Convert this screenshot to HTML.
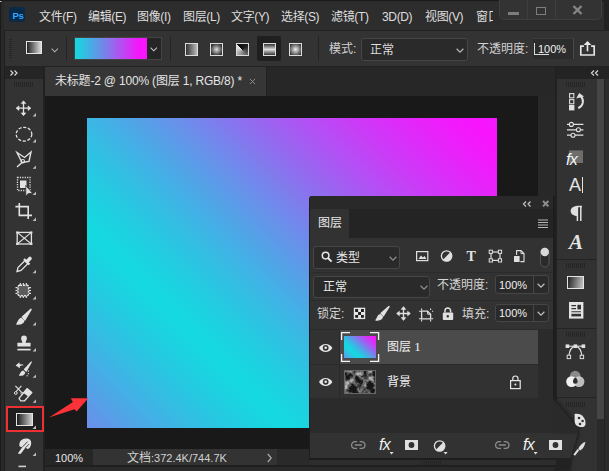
<!DOCTYPE html>
<html lang="zh-CN">
<head>
<meta charset="utf-8">
<title>Photoshop</title>
<style>
html,body{margin:0;padding:0;}
body{width:609px;height:471px;overflow:hidden;background:#292929;position:relative;
 font-family:"Liberation Sans","Noto Sans CJK SC",sans-serif;font-size:12px;color:#dcdcdc;}
.abs{position:absolute;}
.t{position:absolute;white-space:nowrap;line-height:16px;color:#dedede;font-size:12px;}
svg{position:absolute;overflow:visible;}
#menubar{left:4px;top:2px;width:605px;height:28px;background:#2d2d2d;}
#optbar{left:5px;top:30px;width:604px;height:36px;background:#333333;border-top:1px solid #232323;box-sizing:border-box;}
#lstrip{left:0;top:0;width:1px;height:471px;background:#1a1a1a;}
#lstrip2{left:4px;top:30px;width:1px;height:441px;background:#1e1e1e;}
#hl66{left:4px;top:66px;width:605px;height:1px;background:#222222;}
#gap43{left:43px;top:67px;width:2px;height:404px;background:#212121;}
#tabstrip{left:45px;top:67px;width:511px;height:29px;background:#272727;}
#tab{left:45px;top:67px;width:221px;height:29px;background:#363636;border-right:1px solid #212121;box-sizing:content-box;}
#canvas{left:45px;top:96px;width:493px;height:353px;background:#191919;}
#vscroll{left:538px;top:96px;width:18px;height:353px;background:#282828;}
#status{left:45px;top:449px;width:511px;height:22px;background:#2a2a2a;}
#st1{left:45px;top:449px;width:48px;height:16px;background:#262626;}
#st2{left:93px;top:449px;width:184px;height:16px;background:#333333;}
#st3{left:45px;top:465px;width:511px;height:2px;background:#1f1f1f;}
#toolbar{left:5px;top:67px;width:38px;height:404px;background:#333333;}
#toolhead{left:5px;top:67px;width:38px;height:12px;background:#252525;}
#rcol{left:557px;top:67px;width:40px;height:404px;background:#323232;}
#rcolhead{left:557px;top:67px;width:52px;height:12px;background:#232323;}
#rthumb{left:597px;top:79px;width:7px;height:340px;background:#464646;}
#rtrack{left:597px;top:419px;width:7px;height:52px;background:#2a2a2a;}
#redge{left:604px;top:79px;width:5px;height:392px;background:#2c2c2c;border-left:1px solid #222;box-sizing:border-box;}
#rline{left:555px;top:67px;width:2px;height:404px;background:#212121;}
.grip{position:absolute;height:5px;background:repeating-linear-gradient(90deg,#252525 0 1px,transparent 1px 2px);}
.vsep{position:absolute;width:1px;background:#242424;}
.hsep{position:absolute;height:1px;background:#242424;}
.dd{position:absolute;box-sizing:border-box;background:#2a2a2a;border:1px solid #464646;border-radius:3px;}
</style>
</head>
<body>
<div id="menubar" class="abs"></div>
<div id="optbar" class="abs"></div>
<div id="tabstrip" class="abs"></div>
<div id="tab" class="abs"></div>
<div id="canvas" class="abs"></div>
<div id="vscroll" class="abs"></div>
<div id="status" class="abs"></div><div id="st1" class="abs"></div><div id="st2" class="abs"></div><div id="st3" class="abs"></div>
<div id="lstrip" class="abs"></div><div id="lstrip2" class="abs"></div><div id="hl66" class="abs"></div><div id="gap43" class="abs"></div>
<div id="toolbar" class="abs"></div>
<div id="toolhead" class="abs"></div>
<div id="rcol" class="abs"></div>
<div id="rcolhead" class="abs"></div>
<div id="rthumb" class="abs"></div>
<div id="rtrack" class="abs"></div>
<div id="redge" class="abs"></div><div id="rline" class="abs"></div>

<div class="abs" style="left:0;top:0;width:2px;height:2px;background:#e8e8e8;border-radius:0 0 2px 0;"></div>
<!-- PS logo -->
<div class="abs" style="left:9px;top:7px;width:16px;height:15px;background:#0a2a4a;border-radius:3px;"></div>
<div class="t" style="left:12.5px;top:7.5px;font-size:9.5px;font-weight:bold;color:#31a8ff;line-height:15px;letter-spacing:-0.3px;">Ps</div>

<!-- MENU TEXT -->
<div class="t" style="left:39px;top:9px;letter-spacing:-0.35px;">文件(F)</div>
<div class="t" style="left:88px;top:9px;letter-spacing:-0.35px;">编辑(E)</div>
<div class="t" style="left:137px;top:9px;letter-spacing:-0.35px;">图像(I)</div>
<div class="t" style="left:183px;top:9px;letter-spacing:-0.35px;">图层(L)</div>
<div class="t" style="left:231px;top:9px;letter-spacing:-0.35px;">文字(Y)</div>
<div class="t" style="left:281px;top:9px;letter-spacing:-0.35px;">选择(S)</div>
<div class="t" style="left:331px;top:9px;letter-spacing:-0.35px;">滤镜(T)</div>
<div class="t" style="left:382px;top:9px;letter-spacing:-0.35px;">3D(D)</div>
<div class="t" style="left:425px;top:9px;letter-spacing:-0.35px;">视图(V)</div>
<div class="t" style="left:476px;top:9px;width:17px;overflow:hidden;">窗口</div>

<div class="abs" style="left:0;top:0;width:609px;height:1px;background:#1b1b1b;"></div>
<div class="abs" style="left:604px;top:0;width:5px;height:30px;background:#222222;"></div>
<!-- window controls -->
<div class="abs" style="left:499px;top:-2px;width:103px;height:22px;box-sizing:border-box;background:#333333;border:1px solid #3e3e3e;border-radius:0 0 5px 5px;"></div>
<div class="abs" style="left:527px;top:0;width:1px;height:19px;background:#3e3e3e;"></div>
<div class="abs" style="left:555px;top:0;width:1px;height:19px;background:#3e3e3e;"></div>
<div class="abs" style="left:508px;top:12px;width:11px;height:3px;background:#7d7d7d;"></div>
<div class="abs" style="left:536px;top:7px;width:10px;height:8.4px;box-sizing:border-box;border:1.8px solid #7d7d7d;"></div>
<svg style="left:572px;top:5px;" width="11" height="10" viewBox="0 0 11 10"><path d="M1.5 1 L9.5 9 M9.5 1 L1.5 9" stroke="#858585" stroke-width="2.4" fill="none"/></svg>

<!-- OPTIONS BAR -->
<div class="abs" style="left:9px;top:39px;width:3px;height:19px;background:repeating-linear-gradient(0deg,#262626 0 1px,transparent 1px 2px);"></div>
<div class="abs" style="left:26px;top:41px;width:16px;height:13px;box-sizing:border-box;border:1px solid #e6e6e6;background:linear-gradient(90deg,#222,#ddd);"></div>
<svg style="left:51px;top:47.5px;" width="7.5" height="5" viewBox="0 0 9 6"><path d="M0.7 0.8 L4.5 4.6 L8.3 0.8" stroke="#b0b0b0" stroke-width="1.3" fill="none"/></svg>
<div class="vsep" style="left:66px;top:36px;height:25px;"></div>
<div class="abs" style="left:74px;top:37px;width:88px;height:23px;box-sizing:border-box;border:1px solid #444444;background:#252525;"></div>
<div class="abs" style="left:75px;top:38px;width:72px;height:21px;background:linear-gradient(90deg,#14d9df 0%,#5a9ce6 30%,#a55cee 58%,#f416fb 88%,#f814fd 100%);"></div>
<svg style="left:150px;top:47px;" width="7.5" height="5" viewBox="0 0 9 6"><path d="M0.7 0.8 L4.5 4.6 L8.3 0.8" stroke="#c8c8c8" stroke-width="1.3" fill="none"/></svg>
<div class="vsep" style="left:170px;top:36px;height:25px;"></div>
<!-- gradient type icons -->
<div class="abs" style="left:257px;top:36px;width:24px;height:25px;background:#1f1f1f;border-radius:2px;"></div>
<div class="abs gi" style="left:185px;top:43px;width:13px;height:13px;box-sizing:border-box;border:1px solid #dcdcdc;background:linear-gradient(90deg,#333,#bbb);"></div>
<div class="abs gi" style="left:210px;top:43px;width:13px;height:13px;box-sizing:border-box;border:1px solid #dcdcdc;background:radial-gradient(circle,#ddd 0%,#333 80%);"></div>
<div class="abs gi" style="left:236px;top:43px;width:13px;height:13px;box-sizing:border-box;border:1px solid #dcdcdc;background:conic-gradient(from -45deg,#0c0c0c 0deg,#1c1c1c 90deg,#999 250deg,#f0f0f0 360deg);"></div>
<div class="abs gi" style="left:263px;top:43px;width:13px;height:13px;box-sizing:border-box;border:1px solid #dcdcdc;background:linear-gradient(180deg,#333,#ddd 50%,#333);"></div>
<div class="abs gi" style="left:289px;top:43px;width:13px;height:13px;box-sizing:border-box;border:1px solid #dcdcdc;background:radial-gradient(circle,#eee 0%,#333 90%);"></div>
<div class="vsep" style="left:318px;top:36px;height:25px;"></div>
<div class="t" style="left:329px;top:41px;color:#d0d0d0;">模式:</div>
<div class="dd" style="left:361px;top:38px;width:107px;height:23px;"></div>
<div class="t" style="left:370px;top:42px;">正常</div>
<svg style="left:456px;top:48px;" width="8" height="5.4" viewBox="0 0 9 6"><path d="M0.7 0.8 L4.5 4.6 L8.3 0.8" stroke="#b8b8b8" stroke-width="1.3" fill="none"/></svg>
<div class="t" style="left:477px;top:41px;color:#d0d0d0;">不透明度:</div>
<div class="abs" style="left:533px;top:38px;width:41px;height:21px;box-sizing:border-box;background:#2c2c2c;border-right:1px solid #4a4a4a;border-top:1px solid #3c3c3c;"></div>
<div class="abs" style="left:534px;top:43px;width:1px;height:12px;background:#ddd;"></div>
<div class="abs" style="left:534px;top:54px;width:15px;height:1px;background:#ddd;"></div>
<div class="t" style="left:538px;top:40.5px;color:#f0f0f0;font-size:11px;">100%</div>
<svg style="left:578.5px;top:39.5px;" width="17" height="16.5" viewBox="0 0 16 16"><path d="M4.5 6 H1.5 V14.5 H14.5 V6 H11.5" stroke="#e6e6e6" stroke-width="1.6" fill="none"/><path d="M8 11 V2" stroke="#e6e6e6" stroke-width="1.6" fill="none"/><path d="M4.2 4.8 L8 1 L11.8 4.8 Z" fill="#e6e6e6"/></svg>

<!-- TAB -->
<div class="t" style="left:55px;top:73px;color:#e4e4e4;letter-spacing:-0.19px;">未标题-2 @ 100% (图层 1, RGB/8) *</div>
<svg style="left:249px;top:78px;" width="7" height="7" viewBox="0 0 8 8"><path d="M1 1 L7 7 M7 1 L1 7" stroke="#8c8c8c" stroke-width="1.1" fill="none"/></svg>

<!-- ARTWORK -->
<svg id="art" style="left:87px;top:118px;" width="410" height="310" viewBox="87 118 410 310">
 <defs>
  <linearGradient id="g1" gradientUnits="userSpaceOnUse" x1="170.0" y1="310.0" x2="417.5" y2="62.5" spreadMethod="reflect">
 <stop offset="0.0000" stop-color="#14d9df"/>
 <stop offset="0.0625" stop-color="#1cd2e0"/>
 <stop offset="0.1250" stop-color="#27c8e2"/>
 <stop offset="0.1875" stop-color="#34bde3"/>
 <stop offset="0.2500" stop-color="#42b1e5"/>
 <stop offset="0.3125" stop-color="#52a3e7"/>
 <stop offset="0.3750" stop-color="#6395e9"/>
 <stop offset="0.4375" stop-color="#7486ec"/>
 <stop offset="0.5000" stop-color="#8676ee"/>
 <stop offset="0.5625" stop-color="#9867f0"/>
 <stop offset="0.6250" stop-color="#a958f3"/>
 <stop offset="0.6875" stop-color="#ba4af5"/>
 <stop offset="0.7500" stop-color="#ca3cf7"/>
 <stop offset="0.8125" stop-color="#d830f9"/>
 <stop offset="0.8750" stop-color="#e525fa"/>
 <stop offset="0.9375" stop-color="#f01bfc"/>
 <stop offset="1.0000" stop-color="#f814fd"/>
</linearGradient>
 </defs>
 <rect x="87" y="118" width="410" height="310" fill="url(#g1)"/>
</svg>

<!-- red arrow -->
<svg style="left:0;top:0;" width="609" height="471" viewBox="0 0 609 471"><path d="M49 417.4 L72.9 402 L70.8 398.3 L88.3 398.3 L76.6 411.5 L74.5 409.2 Z" fill="#fb3237"/></svg>

<!-- STATUS -->
<div class="t" id="zoomtxt" style="left:55px;top:450px;font-size:11px;color:#e6e6e6;">100%</div>
<div class="t" id="doctxt" style="left:127px;top:450px;color:#d2d2d2;">文档<span style="font-size:11px;">:372.4K/744.7K</span></div>
<svg style="left:267px;top:453px;" width="5" height="10" viewBox="0 0 5 10"><path d="M0.8 1 L4.2 5 L0.8 9" stroke="#aaa" stroke-width="1.2" fill="none"/></svg>

<!-- LEFT TOOLBAR -->
<svg style="left:0;top:0;" width="50" height="471" viewBox="0 0 50 471" fill="none" stroke="#e2e2e2" stroke-width="1.4">
 <!-- >> -->
 <path d="M10.5 70.5 L13 73 L10.5 75.5 M14.5 70.5 L17 73 L14.5 75.5" stroke="#d8d8d8" stroke-width="1.2"/>
 <!-- move -->
 <g>
  <path d="M23.5 101.5 V115 M16.8 108.2 H30.2" stroke-width="1.3"/>
  <path d="M21.2 103.6 L23.5 100.8 L25.8 103.6 Z M21.2 112.9 L23.5 115.7 L25.8 112.9 Z M18.9 105.9 L16.1 108.2 L18.9 110.5 Z M28.1 105.9 L30.9 108.2 L28.1 110.5 Z" fill="#e2e2e2" stroke-width="0.6"/>
 </g>
 <!-- ellipse marquee -->
 <ellipse cx="24" cy="134.2" rx="7.8" ry="6.9" stroke-dasharray="3.2 1.6" stroke-width="1.3"/>
 <!-- polygonal lasso -->
 <path d="M17 152.5 L24.5 157.5 L31 152 L29 161.5 L22 162.5 Z" stroke-width="1.4"/>
 <path d="M22 162.5 L17 167" stroke-width="1.4"/>
 <circle cx="22.8" cy="161.2" r="1.7" stroke-width="1.1"/>
 <!-- object select -->
 <rect x="17.5" y="177.5" width="12.5" height="13" stroke-dasharray="1.2 1.2" stroke-width="1.3"/>
 <rect x="20" y="180.5" width="6.5" height="7.5" fill="#e2e2e2" stroke="none"/>
 <path d="M25.8 185.5 L25.8 196 L28.3 193.6 L32.6 193.4 Z" fill="#e2e2e2" stroke="#333" stroke-width="0.8"/>
 <!-- crop -->
 <path d="M19.3 203 V215.4 H32 M15.4 206.6 H28.2 V219" stroke-width="1.6"/>
 <!-- frame -->
 <rect x="17.2" y="232.4" width="14.2" height="11.6" stroke-width="1.3"/>
 <path d="M17.2 232.4 L31.4 244 M31.4 232.4 L17.2 244" stroke-width="1.1"/>
 <path d="M16.2 231.4 h2.2 v2.2 h-2.2 Z M30.2 231.4 h2.2 v2.2 h-2.2 Z M16.2 242.8 h2.2 v2.2 h-2.2 Z M30.2 242.8 h2.2 v2.2 h-2.2 Z" fill="#e2e2e2" stroke="none"/>
 <!-- eyedropper -->
 <path d="M17 271.5 L18 267.5 L25 260.5 L28 263.5 L21 270.5 Z" stroke-width="1.3"/>
 <path d="M24 259 L29.5 264.5" stroke-width="2.2"/>
 <path d="M27 261.5 L30 258.5" stroke-width="3.6" stroke-linecap="round"/>
 <!-- patch/heal -->
 <rect x="18" y="285.3" width="10.6" height="10.4" rx="1.6" fill="#5c5c5c" stroke-width="1.4" stroke-dasharray="2.4 0.9"/>
 <path d="M20.3 283 V285 M23.3 283 V285 M26.3 283 V285 M20.3 296 V298 M23.3 296 V298 M26.3 296 V298 M15.5 287.6 H17.5 M15.5 290.5 H17.5 M15.5 293.4 H17.5 M29 287.6 H31 M29 290.5 H31 M29 293.4 H31" stroke-width="1.2"/>
 <!-- brush -->
 <path d="M31 309.4 L22.4 317 L24.8 319.8 Z" fill="#e2e2e2" stroke-width="1.6" stroke-linejoin="round"/>
 <path d="M21.4 317.8 C18.6 318 18 321.4 16 324.4 C19.8 325.6 24.4 324 24.4 320.6 Z" fill="#e2e2e2" stroke="none"/>
 <!-- stamp -->
 <path d="M24 335.6 a2.9 2.9 0 0 1 2.9 2.9 c0 1.8 -1.3 2.6 -1.3 4.3 H30.6 V346.6 H17.4 V342.8 H22.4 c0 -1.7 -1.3 -2.5 -1.3 -4.3 a2.9 2.9 0 0 1 2.9 -2.9 Z" fill="#e2e2e2" stroke="none"/>
 <path d="M17.4 349.6 H30.6" stroke-width="1.7"/>
 <!-- history brush -->
 <path d="M31.4 362 L24.4 369.4 L26.2 371.2 Z" fill="#e2e2e2" stroke-width="1.1" stroke-linejoin="round"/>
 <path d="M23.2 370.4 C21 370.6 20.4 373 18.8 375.6 C21.8 376.4 25.2 375 25.3 372.2 Z" fill="#e2e2e2" stroke="none"/>
 <path d="M15.6 365.4 L19.4 362.2 L19.6 364.2 C21.6 364 23.2 364.4 24.4 365.4 C22.8 365.2 21.2 365.4 19.8 366.2 L20 368.2 Z" fill="#e2e2e2" stroke="none"/>
 <path d="M28.2 370.5 C29 373 28 375.4 26.2 376.6" stroke-dasharray="1.2 1.3" stroke-width="1.1"/>
 <!-- bg eraser -->
 <path d="M27 388.6 L31.8 392.6 L24.6 400.8 H20.8 L19 398.4 Z" stroke-width="1.3" stroke-linejoin="round"/>
 <path d="M27 388.6 L31.8 392.6 L28.2 396.6 L23.2 392.8 Z" fill="#e2e2e2" stroke="none"/>
 <path d="M15.4 385.8 L21.6 392.4 M21.4 385.8 L16 391.6" stroke-width="1.1"/>
 <circle cx="15.8" cy="393" r="1.4" stroke-width="1"/>
 <circle cx="22" cy="393.4" r="1.1" stroke-width="0.9"/>
 <!-- smudge -->
 <path d="M19.4 446 C18.8 441.2 22 438.4 26 438.4 C29.6 438.4 31.4 440.2 31.2 443.4 C31 446.4 29.6 448.4 27.4 449 L25.6 447.6 L20.6 454 L17.8 453.6 L22.6 446.8 C21.4 447.2 20 447 19.4 446 Z" fill="#e2e2e2" stroke="none"/>
 <path d="M22.6 446.8 L27.6 441.6 M25.6 447.6 L29 444.2" stroke="#333" stroke-width="0.9"/>
 <!-- next icon top -->
 <path d="M18.5 466.4 H26" stroke-width="1.6" stroke="#cfcfcf"/>
 <!-- corner triangles -->
 <g fill="#bdbdbd" stroke="none">
  <path d="M36 113 V116.4 H32.6 Z"/><path d="M36 139 V142.4 H32.6 Z"/><path d="M36 165.4 V168.8 H32.6 Z"/>
  <path d="M36 191.6 V195 H32.6 Z"/><path d="M36 217.6 V221 H32.6 Z"/><path d="M36 269.8 V273.2 H32.6 Z"/>
  <path d="M36 296 V299.4 H32.6 Z"/><path d="M36 322 V325.4 H32.6 Z"/><path d="M36 348 V351.4 H32.6 Z"/>
  <path d="M36 374.4 V377.8 H32.6 Z"/><path d="M36 399.4 V402.8 H32.6 Z"/><path d="M36 452.6 V456 H32.6 Z"/>
 </g>
</svg>
<div class="grip" style="left:14px;top:82px;width:20px;"></div>
<!-- selected gradient tool + red box -->
<div class="abs" style="left:6px;top:406.3px;width:38px;height:26.2px;box-sizing:border-box;border:2.8px solid #ee3035;background:#1f1f1f;"></div>
<div class="abs" style="left:16px;top:413px;width:17px;height:13px;box-sizing:border-box;border:1px solid #e4e4e4;background:linear-gradient(90deg,#1a1a1a,#cfcfcf);"></div>
<svg style="left:32px;top:425px;" width="5" height="5" viewBox="0 0 5 5"><path d="M4 0.4 V4 H0.4 Z" fill="#bdbdbd"/></svg>

<!-- RIGHT COLUMN -->
<svg style="left:0;top:0;" width="609" height="471" viewBox="0 0 609 471" fill="none" stroke="#e0e0e0" stroke-width="1.3">
 <!-- << header -->
 <path d="M594 70.5 L591.5 73 L594 75.5 M598 70.5 L595.5 73 L598 75.5" stroke="#d8d8d8" stroke-width="1.2"/>
 <!-- history -->
 <rect x="569.6" y="93.6" width="4.2" height="4.2" stroke-width="1.1"/>
 <rect x="569.6" y="99.6" width="4.2" height="4.2" stroke-width="1.1"/>
 <rect x="569" y="105" width="5.4" height="5.4" fill="#e0e0e0" stroke="none"/>
 <path d="M578.2 108.2 C583.6 105.6 584.4 99.8 580.6 96" stroke-width="1.9"/>
 <path d="M576.2 98.6 L579.2 93 L584 96.6 Z" fill="#e0e0e0" stroke="none"/>
 <!-- properties sliders -->
 <path d="M567 124.4 H583.4 M567 129.8 H583.4 M567 135.2 H583.4" stroke-width="1.2"/>
 <circle cx="571.4" cy="124.4" r="2" fill="#323232" stroke-width="1.1"/>
 <circle cx="578.4" cy="129.8" r="2" fill="#323232" stroke-width="1.1"/>
 <circle cx="573" cy="135.2" r="2" fill="#323232" stroke-width="1.1"/>
 <!-- styles -->
 <rect x="569" y="150.4" width="14" height="12.6" fill="#6e6e6e" stroke="none"/>
 <!-- paragraph -->
 <path d="M576.6 206.6 H582 M577.4 206.6 V221 M580.8 206.6 V221" stroke-width="1.5"/>
 <path d="M577.4 206 C568.4 206 568.4 216 577.4 216 Z" fill="#e0e0e0" stroke="none"/>
 <!-- separators -->
 <path d="M557 259.5 H596 M557 328.5 H596 M557 397.5 H596" stroke="#232323" stroke-width="1"/>
 <!-- libraries icon -->
 <rect x="569" y="302" width="14.4" height="16.6" fill="#e4e4e4" stroke="none"/>
 <path d="M571.4 305.6 H576 M571.4 308.6 H576 M571.4 311.8 H581" stroke="#333" stroke-width="1.1"/>
 <rect x="577.4" y="304.8" width="3.6" height="4.6" fill="#333" stroke="none"/>
 <rect x="571.4" y="313.8" width="9.6" height="2.6" fill="#333" stroke="none"/>
 <!-- paths icon -->
 <path d="M568.8 357 C569.4 349.6 572 346.6 575.4 346.4 C578.8 346.6 581.4 349.6 582 357" stroke-width="1.2"/>
 <path d="M567.4 346.2 H583.4" stroke-width="1.1"/>
 <rect x="565.6" y="344.4" width="3.6" height="3.6" fill="#e0e0e0" stroke="none"/>
 <rect x="573.6" y="344.4" width="3.6" height="3.6" fill="#e0e0e0" stroke="none"/>
 <rect x="581.6" y="344.4" width="3.6" height="3.6" fill="#e0e0e0" stroke="none"/>
 <rect x="567.2" y="355.2" width="3.4" height="3.4" fill="#323232" stroke-width="1"/>
 <rect x="580.2" y="355.2" width="3.4" height="3.4" fill="#323232" stroke-width="1"/>
 <!-- channels icon -->
 <circle cx="575.2" cy="376.2" r="5.4" fill="#8a8a8a" stroke="none"/>
 <circle cx="571.6" cy="381.6" r="5.4" fill="#f0f0f0" stroke="none"/>
 <circle cx="579" cy="381.6" r="5.4" fill="#d6d6d6" stroke="none" fill-opacity="0.85"/>
 <path d="M575.3 377.6 a4 4 0 0 1 1.8 5.6 a4 4 0 0 1 -3.6 0 a4 4 0 0 1 1.8 -5.6 Z" fill="#2e2e2e" stroke="none"/>
</svg>
<div class="grip" style="left:566px;top:82px;width:20px;"></div>
<div class="grip" style="left:566px;top:263px;width:20px;"></div>
<div class="grip" style="left:566px;top:332px;width:20px;"></div>
<div class="grip" style="left:566px;top:402px;width:20px;"></div>
<div class="t" style="left:566px;top:152px;font-style:italic;font-size:16px;color:#f4f4f4;letter-spacing:-0.6px;">fx</div>
<div class="t" style="left:569px;top:175px;font-size:18px;line-height:20px;color:#e4e4e4;">A</div>
<div class="abs" style="left:582px;top:177px;width:1px;height:16px;background:#e4e4e4;"></div>
<div class="t" style="left:569px;top:231px;font-family:'Liberation Serif',serif;font-style:italic;font-weight:bold;font-size:21px;line-height:22px;color:#e4e4e4;">A</div>
<div class="abs" style="left:567px;top:276px;width:17px;height:13px;box-sizing:border-box;border:1px solid #e4e4e4;background:linear-gradient(100deg,#222,#c8c8c8);"></div>

<!-- LAYERS PANEL -->
<div class="abs" style="left:309px;top:196px;width:246px;height:264px;background:#1d1d1d;border-radius:3px 0 0 0;"></div>
<svg style="left:0;top:0;" width="609" height="471" viewBox="0 0 609 471">
 <defs><filter id="bl" x="-20%" y="-20%" width="140%" height="140%"><feGaussianBlur stdDeviation="1.2"/></filter><filter id="bl2" x="-20%" y="-20%" width="140%" height="140%"><feGaussianBlur stdDeviation="0.5"/></filter></defs>
 <path d="M553 397 L557 400 L579.5 426 L579.5 434 L576 446 L572 460 L571 472 L556 472 L553 463 L540 463 L540 397 Z" fill="#202020" filter="url(#bl)"/>
 <path d="M545 398 L554.5 401 L577.5 428 L577.5 433.5 L545 433.5 Z" fill="#2b2b2b" filter="url(#bl2)"/>
 <path d="M545 433.5 L577.5 433.5 L574.5 445 L570.5 458 L545 458 Z" fill="#323232" filter="url(#bl2)"/>
</svg>
<div class="abs" style="left:310px;top:196px;width:243px;height:42px;background:#242424;border-radius:2px 0 0 0;"></div>
<div class="abs" style="left:310px;top:196px;width:243px;height:13px;background:#292929;border-radius:2px 0 0 0;"></div>
<div class="abs" style="left:310px;top:209px;width:39px;height:29px;background:#323232;"></div>
<div class="abs" style="left:310px;top:238px;width:243px;height:160px;background:#323232;"></div>
<div class="abs" style="left:310px;top:398px;width:243px;height:35px;background:#2b2b2b;"></div>
<div class="abs" style="left:310px;top:433px;width:243px;height:25px;background:#323232;"></div>
<div class="abs" style="left:309px;top:460px;width:247px;height:5px;background:#2d2d2d;"></div>
<div class="abs" style="left:309px;top:465px;width:247px;height:2px;background:#1f1f1f;"></div>
<div class="grip" style="left:422px;top:460.5px;width:20px;height:4px;"></div>
<!-- header icons -->
<svg style="left:0;top:0;" width="609" height="471" viewBox="0 0 609 471" fill="none" stroke="#c8c8c8" stroke-width="1.2">
 <path d="M526 201.5 L523.5 204 L526 206.5 M530.5 201.5 L528 204 L530.5 206.5"/>
 <path d="M543 201 L548.4 206.4 M548.4 201 L543 206.4" stroke="#8e8e8e" stroke-width="2"/>
 <path d="M538 220 H548 M538 222.5 H548 M538 225 H548 M538 227.5 H548" stroke="#b4b4b4" stroke-width="1"/>
</svg>
<div class="t" style="left:318px;top:215px;color:#e8e8e8;">图层</div>
<!-- filter row -->
<div class="dd" style="left:313px;top:246px;width:87px;height:23px;"></div>
<svg style="left:321px;top:251px;" width="12" height="12" viewBox="0 0 12 12" fill="none" stroke="#e6e6e6"><circle cx="4.6" cy="4.6" r="3.3" stroke-width="1.5"/><path d="M7 7 L10.6 10.6" stroke-width="2"/></svg>
<div class="t" style="left:336px;top:250px;color:#e8e8e8;">类型</div>
<svg style="left:388.5px;top:255.5px;" width="8" height="5.4" viewBox="0 0 9 6"><path d="M0.7 0.8 L4.5 4.6 L8.3 0.8" stroke="#909090" stroke-width="1.3" fill="none"/></svg>
<svg style="left:0;top:0;" width="609" height="471" viewBox="0 0 609 471" fill="none" stroke="#e0e0e0" stroke-width="1.2">
 <!-- image icon -->
 <rect x="416.6" y="251.6" width="11.2" height="9" stroke-width="1.2"/>
 <path d="M418.4 259 L421 255.4 L423 257.6 L424.6 256 L426.4 259 Z" fill="#e0e0e0" stroke="none"/>
 <!-- adjustment icon -->
 <circle cx="446.6" cy="256" r="5.2" stroke-width="1.3"/>
 <path d="M450.3 252.3 A5.2 5.2 0 0 1 442.9 259.7 Z" fill="#e0e0e0" stroke="none"/>
 <!-- shape icon -->
 <rect x="491" y="252" width="9" height="8.4" stroke-width="1.2"/>
 <rect x="489.2" y="250.2" width="3.2" height="3.2" fill="#333" stroke-width="1"/>
 <rect x="498.4" y="250.2" width="3.2" height="3.2" fill="#333" stroke-width="1"/>
 <rect x="489.2" y="258.8" width="3.2" height="3.2" fill="#333" stroke-width="1"/>
 <rect x="498.4" y="258.8" width="3.2" height="3.2" fill="#333" stroke-width="1"/>
 <!-- smart object icon -->
 <path d="M516.6 255 V250.6 H521 L524 253.6 V261.6 H520.4" stroke-width="1.1"/>
 <path d="M521 250.6 V253.6 H524" stroke-width="1"/>
 <rect x="514" y="256" width="5.6" height="6" fill="#e0e0e0" stroke="none"/>
 <!-- toggle -->
 <rect x="540.6" y="248" width="8.4" height="19" rx="4.2" fill="#2a2a2a" stroke="#555" stroke-width="1"/>
 <circle cx="544.8" cy="252" r="4.2" fill="#d8d8d8" stroke="none"/>
</svg>
<div class="t" style="left:466.5px;top:248.5px;font-family:'Liberation Serif',serif;font-weight:bold;font-size:14px;line-height:16px;color:#e4e4e4;">T</div>
<div class="hsep" style="left:310px;top:272px;width:243px;background:#2b2b2b;"></div>
<div class="hsep" style="left:310px;top:300px;width:243px;background:#2b2b2b;"></div>
<!-- blend row -->
<div class="dd" style="left:313px;top:276px;width:117px;height:22px;"></div>
<div class="t" style="left:323px;top:279px;color:#e8e8e8;">正常</div>
<svg style="left:419.5px;top:284.5px;" width="8" height="5.4" viewBox="0 0 9 6"><path d="M0.7 0.8 L4.5 4.6 L8.3 0.8" stroke="#909090" stroke-width="1.3" fill="none"/></svg>
<div class="t" style="left:437px;top:277px;color:#d4d4d4;">不透明度:</div>
<div class="dd" style="left:495px;top:275px;width:54px;height:19px;"></div>
<div class="vsep" style="left:533px;top:276px;height:17px;background:#464646;"></div>
<div class="t" style="left:499px;top:277px;color:#f0f0f0;font-size:11px;">100%</div>
<svg style="left:537px;top:282.5px;" width="8" height="5.4" viewBox="0 0 9 6"><path d="M0.7 0.8 L4.5 4.6 L8.3 0.8" stroke="#c0c0c0" stroke-width="1.3" fill="none"/></svg>
<!-- lock row -->
<div class="t" style="left:317px;top:306px;color:#d4d4d4;">锁定:</div>
<svg style="left:0;top:0;" width="609" height="471" viewBox="0 0 609 471" fill="none" stroke="#e0e0e0" stroke-width="1.2">
 <!-- checker -->
 <rect x="353.8" y="307.7" width="11.4" height="11.4" fill="#e6e6e6" stroke="none"/>
 <path d="M355.2 309.1 h2.9 v2.9 h-2.9 Z M361 309.1 h2.9 v2.9 h-2.9 Z M358.1 312 h2.9 v2.9 h-2.9 Z M355.2 314.9 h2.9 v2.9 h-2.9 Z M361 314.9 h2.9 v2.9 h-2.9 Z" fill="#1e1e1e" stroke="none"/>
 <!-- brush -->
 <path d="M389 306.6 L381.2 313.2 L383.4 315.6 Z" fill="#e0e0e0" stroke-width="1.5" stroke-linejoin="round"/>
 <path d="M380.4 314 C377.6 314.2 377.2 317.6 375.2 320.4 C379 321.4 383 319.8 383 316.6 Z" fill="#e0e0e0" stroke="none"/>
 <!-- move -->
 <path d="M403.5 307.6 V319.4 M397.6 313.5 H409.4" stroke-width="1.3"/>
 <path d="M401.2 309.4 L403.5 306.6 L405.8 309.4 Z M401.2 317.6 L403.5 320.4 L405.8 317.6 Z M399.4 311.2 L396.6 313.5 L399.4 315.8 Z M407.6 311.2 L410.4 313.5 L407.6 315.8 Z" fill="#e0e0e0" stroke-width="0.6"/>
 <!-- artboard lock -->
 <path d="M421.6 311.2 H427.6 L430.6 314.2 V318.8 H421.6 Z" stroke-width="1.3"/>
 <path d="M427.6 311.2 V314.2 H430.6" stroke-width="1"/>
 <path d="M419 311.2 H421 M421.6 308.6 V310.6 M419 318.8 H421 M421.6 319.4 V321.4 M431.2 318.8 H433.2 M430.6 319.4 V321.4 M430.6 308.6 V310 M432 311.2 H433.2" stroke-width="1.1"/>
 <!-- lock -->
 <rect x="442.8" y="312.4" width="10.4" height="7.6" rx="1" fill="#e0e0e0" stroke="none"/>
 <path d="M445 312.4 V310.8 a2.8 2.8 0 0 1 5.6 0 V312.4" stroke-width="1.5"/>
 <circle cx="447.8" cy="316.2" r="1.2" fill="#333" stroke="none"/>
</svg>
<div class="t" style="left:462px;top:306px;color:#d4d4d4;">填充:</div>
<div class="dd" style="left:495px;top:304px;width:54px;height:18px;"></div>
<div class="vsep" style="left:533px;top:305px;height:16px;background:#464646;"></div>
<div class="t" style="left:499px;top:305px;color:#f0f0f0;font-size:11px;">100%</div>
<svg style="left:537px;top:311px;" width="8" height="5.4" viewBox="0 0 9 6"><path d="M0.7 0.8 L4.5 4.6 L8.3 0.8" stroke="#c0c0c0" stroke-width="1.3" fill="none"/></svg>
<!-- layer rows -->
<div class="abs" style="left:538px;top:329px;width:15px;height:69px;background:#2b2b2b;"></div>
<div class="abs" style="left:340px;top:330px;width:198px;height:34px;background:#4b4b4b;"></div>
<div class="hsep" style="left:310px;top:329px;width:228px;background:#2a2a2a;"></div>
<div class="hsep" style="left:310px;top:364px;width:228px;background:#2a2a2a;"></div>
<div class="vsep" style="left:339px;top:330px;height:68px;background:#2a2a2a;"></div>
<svg style="left:0;top:0;" width="609" height="471" viewBox="0 0 609 471" fill="none" stroke="#e6e6e6" stroke-width="1.2">
 <!-- eyes -->
 <path d="M319 348 C322 342.6 329.4 342.6 332.4 348 C329.4 353.4 322 353.4 319 348 Z" fill="#e6e6e6" stroke="none"/>
 <circle cx="325.7" cy="347.8" r="2.9" fill="#333" stroke="none"/><circle cx="325.7" cy="347.8" r="1.3" fill="#e6e6e6" stroke="none"/>
 <path d="M319 382 C322 376.6 329.4 376.6 332.4 382 C329.4 387.4 322 387.4 319 382 Z" fill="#e6e6e6" stroke="none"/>
 <circle cx="325.7" cy="381.8" r="2.9" fill="#333" stroke="none"/><circle cx="325.7" cy="381.8" r="1.3" fill="#e6e6e6" stroke="none"/>
 <!-- thumb brackets -->
 <path d="M341.6 340 V332.6 H350 M370 332.6 H378.6 V340 M378.6 354 V361.4 H370 M350 361.4 H341.6 V354" stroke="#f4f4f4" stroke-width="1.3"/>
 <!-- bg lock -->
 <rect x="510.6" y="380.6" width="9.6" height="8" stroke-width="1.2"/>
 <path d="M512.8 380.6 V378.6 a2.6 2.6 0 0 1 5.2 0 V380.6" stroke-width="1.2"/>
 <circle cx="515.4" cy="384.6" r="1" fill="#e6e6e6" stroke="none"/>
</svg>
<svg style="left:344px;top:336px;" width="32" height="22" viewBox="87 118 410 310" preserveAspectRatio="none"><rect x="87" y="118" width="410" height="310" fill="url(#g1)"/></svg>
<svg style="left:344px;top:370px;" width="32" height="24" viewBox="0 0 32 24">
 <defs><filter id="cl" x="0" y="0" width="100%" height="100%"><feTurbulence type="fractalNoise" baseFrequency="0.13" numOctaves="4" seed="7"/><feColorMatrix type="matrix" values="0 0 0 0 0  0 0 0 0 0  0 0 0 0 0  3.2 0 0 0 -1.3" result="n"/><feComposite in="SourceGraphic" in2="n" operator="in"/></filter></defs>
 <rect width="32" height="24" fill="#161616"/>
 <rect width="32" height="24" fill="#b4b4b4" filter="url(#cl)"/>
 <rect x="0.5" y="0.5" width="31" height="23" fill="none" stroke="#666" stroke-width="1"/>
</svg>
<div class="t" style="left:387px;top:339px;color:#f0f0f0;">图层 <span style="font-family:'Liberation Serif',serif;font-size:13px;">1</span></div>
<div class="t" style="left:387px;top:374px;color:#f0f0f0;">背景</div>
<!-- bottom bar icons -->
<svg style="left:0;top:0;" width="609" height="471" viewBox="0 0 609 471" fill="none" stroke="#e0e0e0" stroke-width="1.2">
 <g stroke="#8c8c8c" stroke-width="1.3">
  <path d="M357 441.7 H354.9 a3.3 3.3 0 0 0 0 6.6 H357 M359.6 441.7 H361.7 a3.3 3.3 0 0 1 0 6.6 H359.6 M354.8 445 H361.8"/>
  <path d="M501 441.7 H498.9 a3.3 3.3 0 0 0 0 6.6 H501 M503.6 441.7 H505.7 a3.3 3.3 0 0 1 0 6.6 H503.6 M498.8 445 H505.8"/>
 </g>
 <rect x="405" y="440" width="13" height="10" fill="#e0e0e0" stroke="none"/><circle cx="411.5" cy="445" r="2.9" fill="#323232" stroke="none"/>
 <rect x="549" y="440" width="13" height="10" fill="#e0e0e0" stroke="none"/><circle cx="555.5" cy="445" r="2.9" fill="#323232" stroke="none"/>
 <circle cx="439.6" cy="446" r="5.2" stroke-width="1.3"/>
 <path d="M443.3 442.3 A5.2 5.2 0 0 1 435.9 449.7 Z" fill="#e0e0e0" stroke="none"/>
 <path d="M389.6 452 H393.6 L391.6 454.4 Z M443.6 452 H447.6 L445.6 454.4 Z M533.6 452 H537.6 L535.6 454.4 Z" fill="#e0e0e0" stroke="none"/>
 <!-- palette (right col) -->
 <path d="M574.6 414 C581 412.6 586.4 418 585.4 424.4 C584.8 427.4 581.6 427.4 578.4 426.4 C576 425.6 574.6 424 574.6 421 Z" fill="#e4e4e4" stroke="none"/>
 <circle cx="579" cy="418" r="1.3" fill="#333" stroke="none"/><circle cx="582.6" cy="421" r="1.3" fill="#333" stroke="none"/><circle cx="580" cy="424" r="1.3" fill="#333" stroke="none"/>
 <!-- brush settings (right col) -->
 <path d="M585.4 441.8 C582.6 442.8 579.6 445.8 578.2 449 L580.2 450.6 C583 449 585 445.4 585.4 441.8 Z" fill="#e0e0e0" stroke="none"/>
 <path d="M578.4 449.6 L574.2 455.2" stroke-width="2"/>
</svg>
<div class="t" style="left:379px;top:437px;font-style:italic;font-size:16px;color:#f0f0f0;letter-spacing:-0.6px;">fx</div>
<div class="t" style="left:523px;top:437px;font-style:italic;font-size:16px;color:#f0f0f0;letter-spacing:-0.6px;">fx</div>
</body></html>
